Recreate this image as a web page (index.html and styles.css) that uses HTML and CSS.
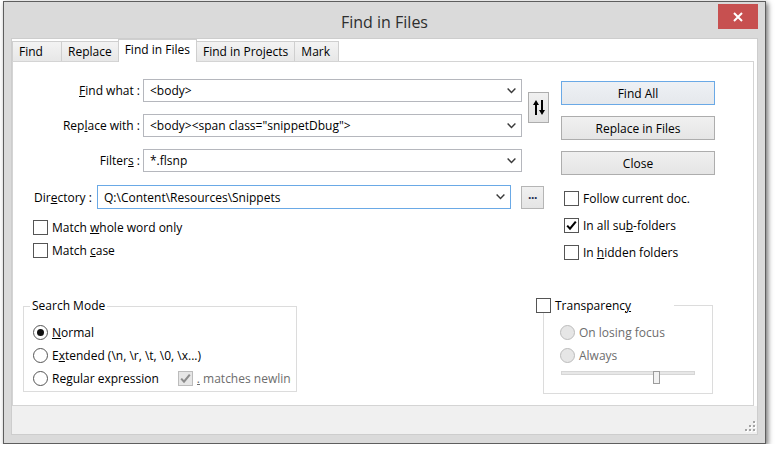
FILE: index.html
```html
<!DOCTYPE html>
<html>
<head>
<meta charset="utf-8">
<title>Find in Files</title>
<link rel="stylesheet" href="styles.css">
</head>
<body>
<div class="window">
  <div class="titlebar">
    <span class="tb-spacer"></span>
    <span class="title">Find in Files</span>
    <button class="close" aria-label="Close">
      <svg width="10" height="10" viewBox="0 0 10 10"><path d="M1 1 L9 9 M9 1 L1 9" stroke="#fff" stroke-width="2" fill="none"/></svg>
    </button>
  </div>
  <div class="client">
    <div class="tabs">
      <div class="tab tab-find">Find</div>
      <div class="tab">Replace</div>
      <div class="tab active">Find in Files</div>
      <div class="tab">Find in Projects</div>
      <div class="tab tab-mark">Mark</div>
    </div>
    <div class="panel">
      <div class="sec-a">
        <div class="fields">
          <div class="field">
            <label class="flabel"><u>F</u>ind what :</label>
            <div class="combo"><span class="val">&lt;body&gt;</span><svg class="chev" width="9" height="6" viewBox="0 0 9 6"><path d="M0.6 0.6 L4.5 4.6 L8.4 0.6" fill="none" stroke="#3a3a3a" stroke-width="1.4"/></svg></div>
          </div>
          <div class="field">
            <label class="flabel">Rep<u>l</u>ace with :</label>
            <div class="combo"><span class="val">&lt;body&gt;&lt;span class="snippetDbug"&gt;</span><svg class="chev" width="9" height="6" viewBox="0 0 9 6"><path d="M0.6 0.6 L4.5 4.6 L8.4 0.6" fill="none" stroke="#3a3a3a" stroke-width="1.4"/></svg></div>
          </div>
          <div class="field">
            <label class="flabel">Filter<u>s</u> :</label>
            <div class="combo"><span class="val">*.flsnp</span><svg class="chev" width="9" height="6" viewBox="0 0 9 6"><path d="M0.6 0.6 L4.5 4.6 L8.4 0.6" fill="none" stroke="#3a3a3a" stroke-width="1.4"/></svg></div>
          </div>
        </div>
        <button class="swap" aria-label="Swap">
          <svg width="12" height="15" viewBox="0 0 12 15"><path d="M0 5 L3 0 L6 5 Z M2 4 H4 V15 H2 Z M8 0 H10 V11 H8 Z M6 10 L12 10 L9 15 Z" fill="#000"/></svg>
        </button>
        <div class="actions">
          <button class="btn btn-default">Find All</button>
          <button class="btn">Replace in Files</button>
          <button class="btn">Close</button>
        </div>
      </div>

      <div class="sec-b">
        <div class="left-b">
          <div class="dir-row">
            <label class="dlabel">Dir<u>e</u>ctory :</label>
            <div class="combo combo-dir"><span class="val">Q:\Content\Resources\Snippets</span><svg class="chev" width="9" height="6" viewBox="0 0 9 6"><path d="M0.6 0.6 L4.5 4.6 L8.4 0.6" fill="none" stroke="#3a3a3a" stroke-width="1.4"/></svg></div>
            <button class="dots">...</button>
          </div>
          <div class="checks-left">
            <div class="chk"><span class="box"></span><span>Match <u>w</u>hole word only</span></div>
            <div class="chk"><span class="box"></span><span>Match <u>c</u>ase</span></div>
          </div>
        </div>
        <div class="checks-right">
          <div class="chk"><span class="box"></span><span>Follow current doc.</span></div>
          <div class="chk"><span class="box"><svg width="13" height="13" viewBox="0 0 13 13"><path d="M2.2 6.6 L5 9.6 L10.8 2.6" fill="none" stroke="#000" stroke-width="2.1"/></svg></span><span>In all su<u>b</u>-folders</span></div>
          <div class="chk"><span class="box"></span><span>In <u>h</u>idden folders</span></div>
        </div>
      </div>

      <div class="sec-c">
        <fieldset class="group mode">
          <legend class="mode-legend">Search Mode</legend>
          <div class="radio"><span class="dot dot-on"></span><span><u>N</u>ormal</span></div>
          <div class="radio"><span class="dot"></span><span>E<u>x</u>tended (\n, \r, \t, \0, \x...)</span></div>
          <div class="radio">
            <span class="dot"></span><span>Regular expression</span>
            <span class="box box-dis"><svg width="13" height="13" viewBox="0 0 13 13"><path d="M2.2 6.6 L5 9.6 L10.8 2.6" fill="none" stroke="#8c8c8c" stroke-width="2.1"/></svg></span>
            <span class="clip"><u>.</u> matches newline</span>
          </div>
        </fieldset>
        <fieldset class="group trans">
          <legend class="trans-legend"><span class="legend-row"><span class="box"></span><span>Transparenc<u>y</u></span></span></legend>
          <div class="radio dis"><span class="dot dot-dis"></span><span>On losing focus</span></div>
          <div class="radio dis"><span class="dot dot-dis"></span><span>Always</span></div>
          <div class="slider"><div class="track"></div><div class="thumb" style="left:92px"></div></div>
        </fieldset>
      </div>
    </div>
    <div class="status">
      <svg class="grip" width="12" height="12" viewBox="0 0 12 12">
        <g fill="#fff"><rect x="10" y="2" width="2" height="2"/><rect x="6" y="6" width="2" height="2"/><rect x="10" y="6" width="2" height="2"/><rect x="2" y="10" width="2" height="2"/><rect x="6" y="10" width="2" height="2"/><rect x="10" y="10" width="2" height="2"/></g>
        <g fill="#a3a3a3"><rect x="9" y="1" width="2" height="2"/><rect x="5" y="5" width="2" height="2"/><rect x="9" y="5" width="2" height="2"/><rect x="1" y="9" width="2" height="2"/><rect x="5" y="9" width="2" height="2"/><rect x="9" y="9" width="2" height="2"/></g>
      </svg>
    </div>
  </div>
</div>
</body>
</html>
```

FILE: styles.css
```css
html, body {
  margin: 0;
  padding: 0;
  background: #ffffff;
}
body {
  font-family: "Open Sans", "Noto Sans", "Liberation Sans", sans-serif;
  font-size: 12px;
  color: #000;
}
u { text-decoration: underline; text-underline-offset: 1px; }
button { font: inherit; color: inherit; }

.window {
  box-sizing: border-box;
  width: 763px;
  height: 443px;
  margin: 1px 0 0 3px;
  border: 1px solid #5e5e5e;
  background: #dadada;
  display: flex;
  flex-direction: column;
  box-shadow: 2px 2px 5px rgba(0, 0, 0, 0.55);
}

/* title bar */
.titlebar {
  height: 36px;
  flex: none;
  display: grid;
  grid-template-columns: 1fr auto 1fr;
}
.title {
  align-self: center;
  font-size: 16px;
  color: #2e2e2e;
  padding-top: 3px;
}
.close {
  justify-self: end;
  align-self: start;
  margin: 2px 7px 0 0;
  width: 40px;
  height: 25px;
  padding: 0;
  border: 0;
  background: #c75050;
  display: flex;
  align-items: center;
  justify-content: center;
}

/* client */
.client {
  flex: 1;
  margin: 0 7px 8px;
  background: #fff;
  border: 1px solid #cdcdcd;
  display: flex;
  flex-direction: column;
}

.tabs {
  display: flex;
  align-items: flex-end;
  height: 22px;
  flex: none;
  position: relative;
  z-index: 1;
}
.tab {
  box-sizing: border-box;
  height: 20px;
  border: 1px solid #cfcfcf;
  border-bottom: 0;
  background: linear-gradient(#f3f3f3, #e7e7e7);
  padding: 0 6px;
  line-height: 19px;
  margin-right: -1px;
  white-space: nowrap;
}
.tab-find { min-width: 50px; }
.tab-mark { min-width: 45px; }
.tab.active {
  height: 23px;
  margin-bottom: -1px;
  background: #fff;
  line-height: 19px;
  position: relative;
}

.panel {
  box-sizing: border-box;
  height: 345px;
  flex: none;
  border: 1px solid #d4d4d4;
  margin-right: 3px;
}

/* section A */
.sec-a {
  display: flex;
  align-items: flex-start;
}
.fields {
  display: flex;
  flex-direction: column;
  gap: 12px;
  margin-top: 17px;
}
.field {
  display: flex;
  align-items: center;
  height: 23px;
}
.flabel {
  width: 127px;
  margin-right: 3px;
  text-align: right;
  white-space: nowrap;
}
.combo {
  box-sizing: border-box;
  width: 379px;
  height: 23px;
  border: 1px solid #b5b7bd;
  background: #fff;
  display: flex;
  align-items: center;
  justify-content: space-between;
  padding: 0 5px 0 6px;
  white-space: nowrap;
}
.chev { flex: none; }
.combo-dir {
  width: 414px;
  height: 24px;
  border-color: #6aa9e6;
}

.swap {
  box-sizing: border-box;
  margin: 30px 0 0 6px;
  width: 21px;
  height: 31px;
  padding: 0;
  border: 1px solid #adadad;
  background: linear-gradient(#f0f0f0, #e3e3e3);
  display: flex;
  align-items: center;
  justify-content: center;
}
.actions {
  margin: 19px 0 0 12px;
  display: flex;
  flex-direction: column;
  gap: 11px;
}
.btn {
  box-sizing: border-box;
  width: 154px;
  height: 24px;
  padding: 0;
  border: 1px solid #adadad;
  background: linear-gradient(#f0f0f0, #e5e5e5);
  text-align: center;
}
.btn-default {
  border-color: #6aa9e6;
  background: linear-gradient(#eef1f5, #e5e8ec);
}

/* section B */
.sec-b {
  display: flex;
  align-items: flex-start;
  margin-top: 10px;
}
.left-b {
  margin-left: 20px;
}
.dir-row {
  display: flex;
  align-items: center;
  height: 24px;
  padding-left: 1px;
}
.dlabel {
  width: 63px;
  white-space: nowrap;
}
.dots {
  box-sizing: border-box;
  margin-left: 10px;
  width: 23px;
  height: 23px;
  padding: 0 0 4px;
  border: 1px solid #b5b5b5;
  background: linear-gradient(#f0f0f0, #e5e5e5);
  color: #1a2a50;
  line-height: 12px;
  font-weight: bold;
  letter-spacing: -0.5px;
}
.checks-left {
  margin-top: 11px;
  display: flex;
  flex-direction: column;
  gap: 8px;
}
.checks-right {
  margin: 6px 0 0 20px;
  display: flex;
  flex-direction: column;
  gap: 12px;
}
.chk {
  display: flex;
  align-items: center;
  height: 15px;
  gap: 4px;
  white-space: nowrap;
}
.box {
  box-sizing: border-box;
  flex: none;
  width: 15px;
  height: 15px;
  border: 1px solid #555;
  background: #fff;
  display: flex;
  align-items: center;
  justify-content: center;
}
.box-dis {
  border-color: #bcbcbc;
  background: #e6e6e6;
  margin-left: 15px;
}

/* section C */
.sec-c {
  display: flex;
  align-items: flex-start;
  margin-top: 38px;
}
.group {
  box-sizing: border-box;
  min-width: 0;
  margin: 0;
  border: 1px solid #dcdcdc;
}
.mode {
  margin: 1px 0 0 10px;
  width: 274px;
  padding: 8px 5px 1px 9px;
}
.mode-legend {
  font-size: 12px;
  line-height: 14px;
  padding: 0 2px;
  margin-left: -3px;
}
.trans {
  margin-left: 246px;
  width: 170px;
  padding: 8px 0 9px 16px;
}
.trans-legend {
  padding: 0;
  margin-left: -24px;
  width: 138px;
  line-height: 15px;
}
.legend-row {
  display: flex;
  align-items: center;
  gap: 4px;
  height: 15px;
}

.radio {
  display: flex;
  align-items: center;
  height: 23px;
  gap: 4px;
  white-space: nowrap;
}
.dot {
  box-sizing: border-box;
  flex: none;
  width: 15px;
  height: 15px;
  border-radius: 50%;
  border: 1px solid #555;
  background: #fff;
  display: flex;
  align-items: center;
  justify-content: center;
}
.dot-on::after {
  content: "";
  width: 7px;
  height: 7px;
  border-radius: 50%;
  background: #111;
}
.dot-dis {
  border-color: #bcbcbc;
  background: #e6e6e6;
}
.dis { color: #6d6d6d; }
.clip {
  flex: 1;
  min-width: 0;
  overflow: hidden;
  color: #6d6d6d;
}

.slider {
  position: relative;
  width: 134px;
  height: 13px;
  margin: 2px 0 0 1px;
}
.track {
  box-sizing: border-box;
  margin-top: 4px;
  height: 4px;
  border: 1px solid #d6d6d6;
  background: #e7e7e7;
}
.thumb {
  position: absolute;
  top: 0;
  box-sizing: border-box;
  width: 7px;
  height: 13px;
  border: 1px solid #9c9c9c;
  background: #f2f2f2;
}

.status {
  flex: 1;
  background: #f0f0f0;
  display: flex;
  justify-content: flex-end;
  align-items: flex-end;
  padding: 0 1px 2px 0;
}
```
